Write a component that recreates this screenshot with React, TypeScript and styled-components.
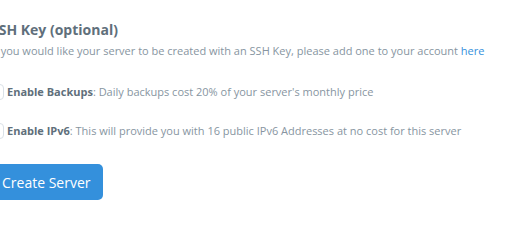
import styled, { createGlobalStyle } from "styled-components";

const Global = createGlobalStyle`
  html, body {
    margin: 0;
    padding: 0;
    background: #fff;
  }
  body {
    font-family: "Open Sans", "Liberation Sans", sans-serif;
  }
`;

const Page = styled.div`
  width: 520px;
  height: 245px;
  overflow: hidden;
`;

const Section = styled.div`
  margin-left: -9px;
  padding-top: 20px;
  display: flex;
  flex-direction: column;
`;

const Heading = styled.h3`
  margin: 0;
  font-size: 14px;
  font-weight: 700;
  line-height: 20px;
  color: #606f7b;
`;

const Text = styled.p`
  margin: 2px 0 0;
  font-size: 11px;
  line-height: 18px;
  color: #8795a1;
  white-space: nowrap;
`;

const Link = styled.a`
  color: #3490dc;
  text-decoration: none;
`;

const Option = styled.label<{ $top: number }>`
  display: flex;
  align-items: center;
  gap: 3px;
  height: 18px;
  font-size: 11px;
  line-height: 18px;
  color: #8795a1;
  white-space: nowrap;
  margin-top: ${(p) => p.$top}px;

  strong {
    color: #606f7b;
    font-weight: 700;
  }
`;

const Box = styled.span`
  box-sizing: border-box;
  width: 16px;
  height: 16px;
  margin-left: -3px;
  border: 1px solid #dae1e7;
  border-radius: 4px;
  background: #fff;
  flex-shrink: 0;
`;

const Button = styled.button`
  align-self: flex-start;
  margin-top: 24px;
  margin-left: -1px;
  height: 36px;
  padding: 0 12px;
  border: none;
  border-radius: 5px;
  background: #3490dc;
  color: #fff;
  font-family: inherit;
  font-size: 14px;
`;

export default function App() {
  return (
    <Page>
      <Global />
      <Section>
        <Heading>SSH Key (optional)</Heading>
        <Text>
          If you would like your server to be created with an SSH Key, please add one to your
          account <Link href="#">here</Link>
        </Text>
        <Option $top={23}>
          <Box />
          <span>
            <strong>Enable Backups</strong>: Daily backups cost 20% of your server's monthly price
          </span>
        </Option>
        <Option $top={21}>
          <Box />
          <span>
            <strong>Enable IPv6</strong>: This will provide you with 16 public IPv6 Addresses at no
            cost for this server
          </span>
        </Option>
        <Button>Create Server</Button>
      </Section>
    </Page>
  );
}
